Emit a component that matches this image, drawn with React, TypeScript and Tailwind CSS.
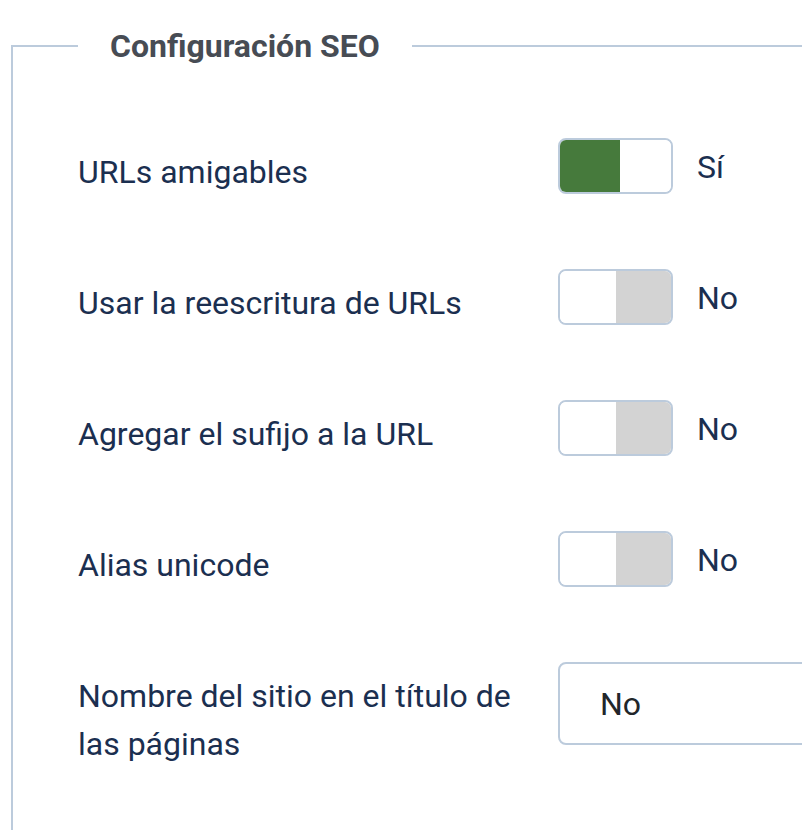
import React from "react";

function Toggle({ on }: { on: boolean }) {
  return (
    <div className="mt-[2px] flex h-[56px] w-[115px] shrink-0 overflow-hidden rounded-[8px] border-2 border-[#bccbdc] bg-white">
      {on ? (
        <>
          <div className="h-full w-[60px] bg-[#467a3c]" />
          <div className="h-full flex-1 bg-white" />
        </>
      ) : (
        <>
          <div className="h-full w-[56px] bg-white" />
          <div className="h-full flex-1 bg-[#d3d3d3]" />
        </>
      )}
    </div>
  );
}

function ToggleRow({ label, on }: { label: string; on: boolean }) {
  return (
    <div className="flex h-[131px] items-start">
      <div className="mt-[12px] w-[480px] shrink-0 text-[32px] leading-[48px] text-[#1b2f50]">{label}</div>
      <Toggle on={on} />
      <div className="ml-[24px] mt-[7px] text-[32px] leading-[48px] text-[#1b2f50]">{on ? "Sí" : "No"}</div>
    </div>
  );
}

export default function App() {
  return (
    <div
      className="h-[830px] w-[802px] overflow-hidden bg-white"
      style={{ fontFamily: "Roboto, 'Liberation Sans', sans-serif" }}
    >
      <fieldset className="ml-[11px] mt-[27px] h-[900px] w-[1100px] border-2 border-[#bccbdc] pl-[65px]">
        <legend className="px-[32px] text-[32px] font-bold leading-[38px] text-[#474c54]">Configuración SEO</legend>
        <div className="mt-[71px] flex flex-col">
          <ToggleRow label="URLs amigables" on={true} />
          <ToggleRow label="Usar la reescritura de URLs" on={false} />
          <ToggleRow label="Agregar el sufijo a la URL" on={false} />
          <ToggleRow label="Alias unicode" on={false} />
          <div className="flex items-start">
            <div className="mt-[12px] w-[480px] shrink-0 pr-[20px] text-[32px] leading-[48px] text-[#1b2f50]">
              Nombre del sitio en el título de las páginas
            </div>
            <div className="mt-[2px] flex h-[83px] w-[420px] items-center rounded-[8px] border-2 border-[#bccbdc] bg-white pl-[40px] text-[32px] text-[#22262a]">
              No
            </div>
          </div>
        </div>
      </fieldset>
    </div>
  );
}
